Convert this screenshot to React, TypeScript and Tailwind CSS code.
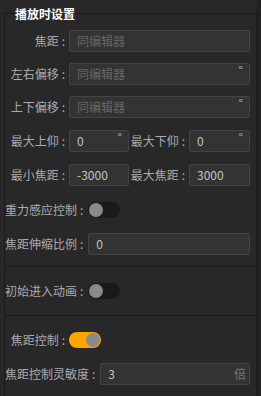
const font = { fontFamily: '"Noto Sans CJK SC", "Noto Sans", sans-serif' };

function Field({ value, placeholder, unit, className }: { value?: string; placeholder?: string; unit?: string; className: string }) {
	return (
		<div className={`relative h-[22px] bg-[#333333] border border-[#434343] rounded-[2px] flex items-center ${className}`}>
			{value ? (
				<span className="pl-[7px] text-[12px] text-[#c4c4c4]">{value}</span>
			) : (
				<span className="pl-[7px] text-[12px] text-[#666666]">{placeholder}</span>
			)}
			{unit === "°" && <span className="absolute right-[6px] top-[-3px] text-[12px] text-[#b5b5b5]">°</span>}
			{unit === "倍" && <span className="absolute right-[3px] text-[12px] text-[#7a7a7a]">倍</span>}
		</div>
	);
}

function Toggle({ on }: { on?: boolean }) {
	return (
		<div className={`w-[32px] h-[16px] rounded-full flex items-center px-[1px] ${on ? "bg-[#ffa500] justify-end" : "bg-[#1a1a1a] justify-start"}`}>
			<div className="w-[14px] h-[14px] rounded-full bg-[#8a8a8a]" />
		</div>
	);
}

function Label({ text, w }: { text: string; w?: string }) {
	return (
		<div className={`text-[12px] text-[#a9abae] whitespace-nowrap text-right ${w ?? ""}`}>
			{text}
			<span className="ml-[3px]">:</span>
		</div>
	);
}

export default function App() {
	return (
		<div className="w-[261px] h-[396px] bg-[#282828] flex overflow-hidden" style={font}>
			<div className="flex-1 pl-[4px] pt-[13px]">
				<div className="relative h-full border-l border-r border-t border-[#1b1b1b]">
					<div className="absolute top-[-8px] left-[9px] px-[1px] bg-[#282828] text-[12px] leading-[16px] font-bold text-white">
						播放时设置
					</div>

					<div className="pt-[16px] pr-[6px] flex flex-col">
						<div className="flex items-center">
							<Label text="焦距" w="w-[60px]" />
							<Field placeholder="同编辑器" className="ml-[4px] flex-1" />
						</div>
						<div className="flex items-center mt-[11px]">
							<Label text="左右偏移" w="w-[60px]" />
							<Field placeholder="同编辑器" unit="°" className="ml-[4px] flex-1" />
						</div>
						<div className="flex items-center mt-[11px]">
							<Label text="上下偏移" w="w-[60px]" />
							<Field placeholder="同编辑器" unit="°" className="ml-[4px] flex-1" />
						</div>
						<div className="flex items-center mt-[12px]">
							<Label text="最大上仰" w="w-[60px]" />
							<Field value="0" unit="°" className="ml-[4px] w-[60px]" />
							<Label text="最大下仰" w="w-[56px]" />
							<Field value="0" unit="°" className="ml-[4px] flex-1" />
						</div>
						<div className="flex items-center mt-[12px]">
							<Label text="最小焦距" w="w-[60px]" />
							<Field value="-3000" className="ml-[4px] w-[60px]" />
							<Label text="最大焦距" w="w-[56px]" />
							<Field value="3000" className="ml-[4px] flex-1" />
						</div>
						<div className="flex items-center mt-[16px] h-[16px]">
							<Label text="重力感应控制" />
							<div className="ml-[5px]">
								<Toggle />
							</div>
						</div>
						<div className="flex items-center mt-[15px]">
							<Label text="焦距伸缩比例" />
							<Field value="0" className="ml-[5px] flex-1" />
						</div>
					</div>

					<div className="mt-[11px] border-t border-[#1b1b1b] h-[49px] flex items-center">
						<Label text="初始进入动画" />
						<div className="ml-[5px]">
							<Toggle />
						</div>
					</div>

					<div className="border-t border-[#1b1b1b] pt-[16px] pr-[6px] flex flex-col">
						<div className="flex items-center h-[16px]">
							<Label text="焦距控制" w="w-[60px]" />
							<div className="ml-[4px]">
								<Toggle on />
							</div>
						</div>
						<div className="flex items-center mt-[15px]">
							<Label text="焦距控制灵敏度" />
							<Field value="3" unit="倍" className="ml-[5px] flex-1" />
						</div>
					</div>
				</div>
			</div>
			<div className="w-[4px] bg-[#222222] border-l border-[#1e1e1e]" />
		</div>
	);
}
